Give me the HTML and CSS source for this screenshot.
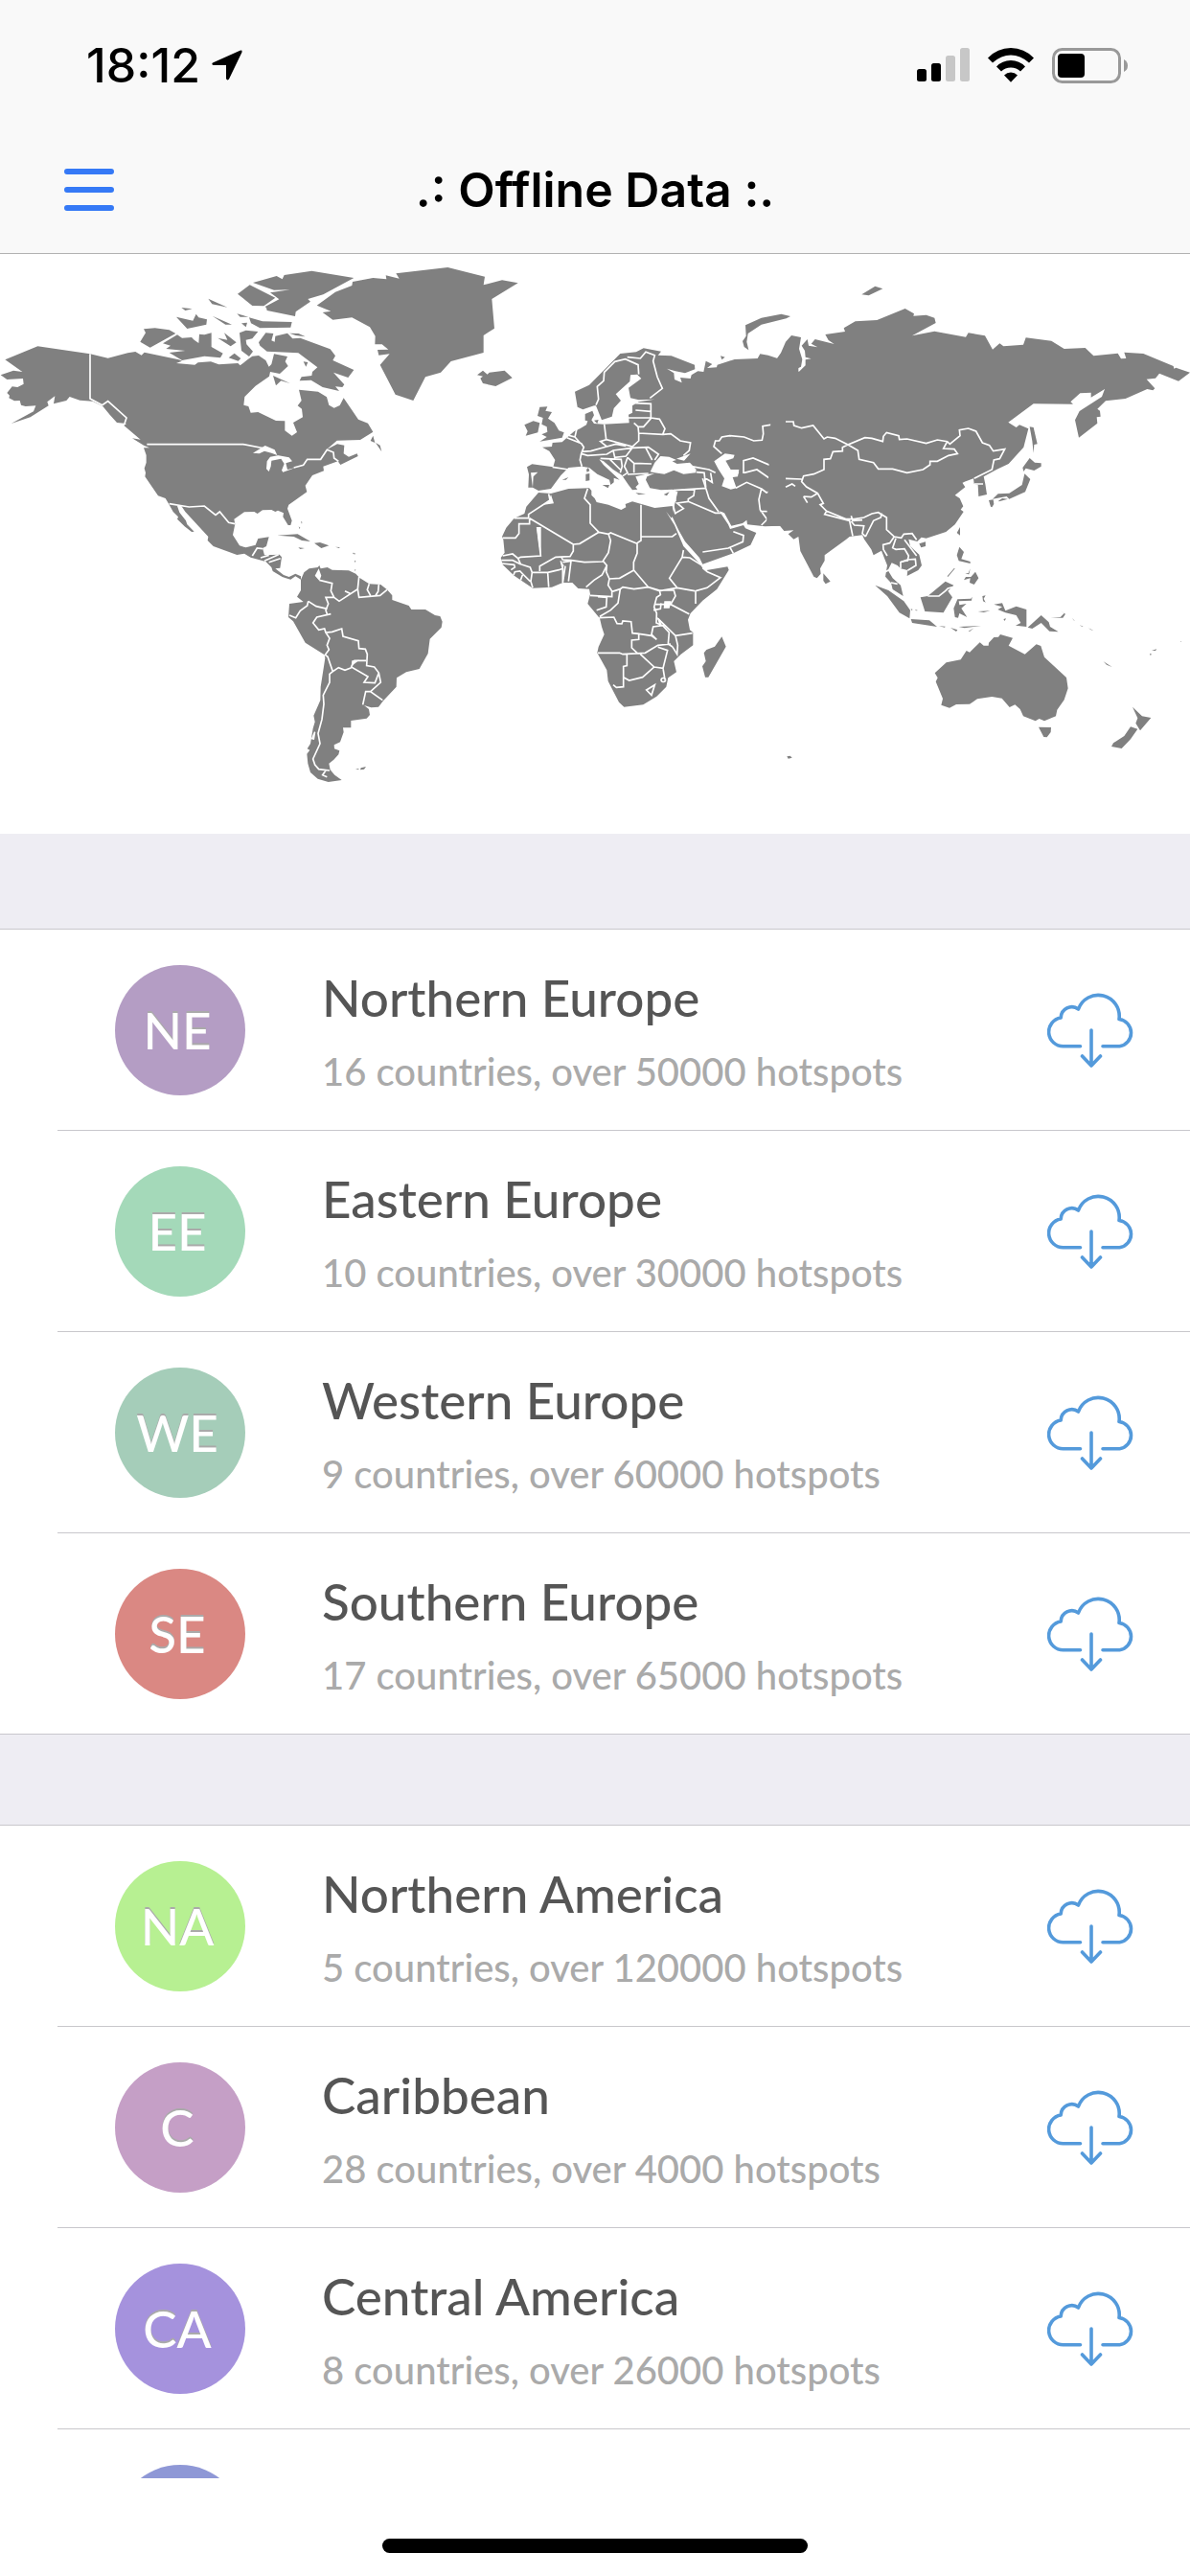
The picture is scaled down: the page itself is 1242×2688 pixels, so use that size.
FILE: index.html
```html
<!DOCTYPE html>
<html lang="en">
<head>
  <meta charset="UTF-8">
  <meta name="viewport" content="width=device-width, initial-scale=1.0">
  <title>Offline Data</title>
  <link rel="stylesheet" href="styles.css">
</head>
<body>

<!-- shared download icon -->
<svg class="defs" width="0" height="0" aria-hidden="true">
  <symbol id="cloud" viewBox="31 35 92 80">
    <path d="M65.500 91.800H48A15 15 0 0 1 45.200 62A11.500 11.500 0 0 1 63.500 53A22 22 0 0 1 106 63.500A14.300 14.300 0 0 1 106.500 91.800H89M77 75V112M67.500 102L77 112L86.500 102" fill="none" stroke="#549adb" stroke-width="3.600" stroke-linecap="round" stroke-linejoin="round"/>
  </symbol>
</svg>

<header>
  <div class="status">
    <span class="time">18:12</span>
    <svg class="location" viewBox="0 0 32 32" width="32" height="32" aria-hidden="true">
      <path d="M31.500 .8Q31 0 29.500 .8L1 13.500Q-.5 15 1.500 16H15V30Q16 32.500 18 30.500L31.500 2.500Z"/>
    </svg>
    <svg class="signal" viewBox="0 0 55 36" width="55" height="36" aria-hidden="true">
      <rect x="0" y="22" width="10" height="13" rx="2.500"/>
      <rect x="15" y="16" width="10" height="19" rx="2.500"/>
      <rect class="off" x="30" y="8" width="10" height="27" rx="2.500"/>
      <rect class="off" x="45" y="0" width="10" height="35" rx="2.500"/>
    </svg>
    <svg class="wifi" viewBox="0 0 50 36" width="50" height="36" aria-hidden="true">
      <path d="M1 10.500Q11 0 25 0T49 10.500L44 15.500Q35 7.500 25 7.500T6 15.500ZM10 19.500Q16 13 25 13T40 19.500L35 24.500Q31 20.500 25 20.500T15 24.500ZM18 28.500Q21 25.500 25 25.500T32 28.500L25 35.800Z"/>
    </svg>
    <svg class="battery" viewBox="0 0 80 37" width="80" height="37" aria-hidden="true">
      <rect x="1.500" y="1.500" width="69" height="34" rx="9" fill="none" stroke="#999" stroke-width="3"/>
      <rect x="6" y="6" width="28" height="25" rx="4"/>
      <path d="M75 12Q79 14 79 18.500T75 25Z" fill="#999"/>
    </svg>
  </div>
  <nav>
    <button class="menu" aria-label="Menu">
      <svg viewBox="0 0 52 46" width="52" height="46" aria-hidden="true">
        <path d="M3 4H49M3 23H49M3 42H49" stroke="#3579f6" stroke-width="6" stroke-linecap="round"/>
      </svg>
    </button>
    <h1>.: Offline Data :.</h1>
  </nav>
</header>

<main>
  <svg class="map" viewBox="0 15 3726 1815" role="img" aria-label="World map">
    <!-- north america, greenland -->
    <g>
      <path class="land" d="M16 346L118 304L282 328L338 341L400 325L424 321L443 332L452 323L560 346L570 350L552 357L610 362L620 355L660 352L685 361L745 357L752 364L775 346L790 335L810 333L832 348L842 368L850 360L858 328L900 336L893 352L902 366L876 390L846 384L843 398L800 428L766 462L763 488L778 492L785 512L808 510L864 537L892 538V568L914 584L930 573L918 543L948 526L945 500L932 490L944 474L936 440L996 446L1023 463L1030 488L1046 497L1064 489L1076 466L1122 533L1152 545L1168 572L1128 597L1055 599L1022 628L1056 610L1078 614L1076 640L1092 650L1118 640L1121 648L1066 675L1058 664L1012 680L1014 694L978 708L956 740L961 760L904 800L900 812L914 850L910 864H902L886 838L888 826L870 818L862 822L850 816L822 817L806 828L796 822L765 823L733 845L736 860L729 895L750 928L770 934L800 926L808 906L842 901L834 930L822 936L828 958L875 956L882 964L877 998L862 1000L888 1020L905 1026L925 1016L942 1024V1034L925 1024L910 1034L895 1030L884 1026L854 1008L850 996L832 978L785 965L765 953L742 957L668 930L650 912L652 900L580 822L568 804H555L562 824L582 850L586 862L608 884L600 885L578 868L555 845L558 838L542 822L530 800L518 780L495 772L454 712L456 700L452 686L458 668V645L450 622H468L450 614L414 592L440 596L388 552L396 546L366 543L345 520L322 492L290 476L250 473L218 462L208 474L168 484L172 460L148 478L152 490L95 526L35 546L105 508L112 490L80 492L66 488L62 474L45 475L28 466L30 458L22 450L38 430L55 432L74 422L72 405L22 408L2 394L42 380L70 384Z"/>
      <path class="land" d="M439 290L456 262L450 250L485 247L530 253L550 264L470 308ZM510 295L555 268L570 278L600 276L608 284L622 294L624 266L640 268L662 262V306L698 326L690 340L640 335L570 348L530 324L580 318L520 312L534 302ZM552 212L604 224L614 203L622 214L648 220L646 236L586 249ZM568 183L602 187L580 192ZM652 155L712 182L664 172ZM665 209L726 236H706ZM682 278L712 284L702 262L740 292L722 304ZM742 202L778 212H752ZM756 232L774 230L770 244ZM780 214L822 226L914 228L910 245L814 247L786 232ZM750 262L770 254L808 258L790 280L770 284L772 298L792 320L780 336L756 318ZM716 340L734 326L754 342L746 350ZM744 140L782 112L862 152L826 178L790 177ZM792 105L866 84L884 94L890 81L976 68L1108 90L1012 142L964 156L972 164L926 196L924 210L836 192L834 184L830 180L874 157L846 136L908 127L858 128ZM810 292L832 262L856 264L850 286L860 290L862 272L900 263L916 280L940 278L1034 313L1050 334L1042 348L1108 378L1090 402L1044 386L1078 424L1072 432L1050 430L1062 444L1010 432L974 410L938 412L944 400L976 396L978 384L994 370L934 325L836 320L814 302ZM906 263L935 264L956 274L926 270ZM950 352L964 354L958 368ZM855 396L908 420L880 412L864 427ZM1160 600L1168 584L1174 606ZM1176 606L1190 614L1195 634ZM868 896L932 892L972 915L945 912L920 900ZM984 920L1002 918L1030 928L1006 936ZM934 934L954 936L940 939ZM1050 932L1064 933L1062 936ZM1104 950L1110 952L1106 954ZM935 868L938 876L940 872ZM942 852L945 860L946 854Z"/>
      <path class="land" d="M992 176L1050 134L1102 114L1104 102L1168 90L1210 94L1208 82L1250 92L1240 76L1402 57L1518 86L1514 112L1572 97L1622 106L1540 156L1548 248L1514 270V324L1412 351L1380 386L1332 400L1294 474L1238 455L1190 362L1220 328L1186 332L1182 315L1216 314L1196 298H1174L1175 272L1158 244L1102 214L1042 221L1010 198L1036 194Z"/>
      <path class="water" d="M792 638L830 615L860 628L868 645L905 652L915 664L895 670L900 690L925 684L886 698L882 692L890 672L880 656L850 662L848 680L842 696L834 688L836 664L846 650L870 646L850 638L828 632L812 640Z"/>
      <path class="border" d="M282 328V468L320 488L338 476L396 528L390 546M460 611H762L830 624M920 684L950 676L962 658H1004L1024 628L1044 636L1046 654L1060 664M530 797L592 807L640 804L675 832L688 822L716 856L736 860M790 960L805 936L822 938M816 966L842 958M828 976L872 956M842 980L878 968"/>
    </g>

    <!-- south america -->
    <g transform="translate(600 840)">
      <path class="land" d="M342 195L352 172L368 160L395 156L400 150L404 160L425 156L440 164L492 166L514 176L525 188L556 208L592 210L612 226L628 244V258L680 276L688 288L732 288L762 306L778 309L785 326L782 344L746 380L740 426L713 474L672 484L642 502L641 530L600 574L585 593L562 595L540 588L555 600L558 618L548 629L499 636V658H474L476 672L465 703L446 712L447 724L463 730L460 742L445 758L430 770L434 790L448 806L470 822L428 828L395 818L372 798L364 770L361 740L370 728L362 724L372 708L380 660L386 640L382 620L403 572L404 530L418 440L416 430L356 392L318 325L303 312L306 270L350 264L330 248L342 228ZM513 788L521 786L525 789ZM528 790L530 784L546 780L540 788ZM508 110L510 118L512 112ZM510 134L512 142L514 136ZM510 164L512 168L514 162Z"/>
      <path class="water" d="M398 160L386 182L400 198L406 182ZM502 448L525 446L500 466ZM384 670L388 672L384 696L374 694Z"/>
      <path class="border" d="M400 196L440 206L436 230L446 250H420L428 270L420 290L424 302M446 250L462 262L520 224L524 186M520 224L524 250L590 244L612 226M556 208L550 226L560 244M586 210L584 232L576 244M480 230L496 238M365 262L390 278L425 286M365 262L362 276L340 292L326 314L306 306M436 302L392 312L380 330L398 352L416 348L420 360L440 358L470 348L474 372L522 386L524 410L544 412L550 428L548 464L572 468L586 486L592 516L560 545L598 572M560 545H545L536 586M586 486L574 518L540 516L552 498L500 468L510 448L546 448M420 360L432 378L424 400L430 414L418 430L426 436L442 482L460 470L480 478L500 470M442 482L432 490V516L412 556L414 584L408 632L396 676L402 708L380 756L386 774L398 788L432 792M420 792L410 806L424 812"/>
    </g>

    <!-- europe, western russia, arabia -->
    <g transform="translate(1200 0)">
      <path class="land" d="M600 446L645 425L685 385L742 327L792 322L815 310L870 320L860 332L902 334L975 362L976 376L945 388L915 382L888 374L910 388L912 408L935 418L930 402L962 405L965 394L985 382L1003 384L1010 350L1030 360L1014 372L1044 370L1046 362L1100 345L1172 342L1180 328L1205 332L1260 350L1300 370V866H1238L1195 868L1140 862L1138 848L1125 858L1090 866L1068 826L1052 820L1080 862L1086 876L1128 864L1134 874L1168 888L1150 926L1096 952L1000 986L990 966L945 915L925 880L905 838L912 800L922 760L905 752L870 754L835 748L822 722L826 712L850 702L820 705L790 712L800 735L790 745L796 752L780 754L768 738L752 715L748 708L720 690L690 664L676 658L690 676L740 722L722 716V730L712 738L708 722L670 704L645 684L622 680L580 684L556 708L525 750L486 756L468 746H454L456 705L450 682L466 673L532 682L538 660L520 632L498 620L528 618L530 606L560 604L575 590L598 570L616 562L636 550L640 538L632 536V516L655 506L660 520L652 535L660 546L690 548L730 546L770 544L768 518L780 512V490L800 478L850 470L800 472L774 466L768 434L808 405L795 392L774 394L772 414L728 454L744 474L722 498L716 524L684 535L666 490H660L625 502L608 494Z"/>
      <path class="land" d="M294 394L312 380L326 392L332 386L380 380L404 403L352 429L312 420L304 404L312 398ZM490 494L514 493L508 506L528 510L516 530L536 544L550 568L566 574L560 590L490 602L512 588L496 580L514 572L512 556L496 548L500 528L483 522ZM442 550L470 538L490 544L484 574L446 584L452 570ZM660 536L674 534L670 546ZM636 690L642 684L646 694L638 698ZM634 704L646 702V724L634 726ZM686 738L708 738L704 748ZM790 763L822 766L800 769ZM878 768L896 760L888 772ZM560 722L580 714L572 722ZM1134 238L1184 215L1246 203L1275 210L1262 217L1184 236L1142 264L1138 290L1144 316L1130 306L1125 288L1136 272ZM1056 334L1070 338L1060 346Z"/>
      <path class="water" d="M836 697L850 668L868 648L895 650L918 660L905 664L920 672L960 668L980 690L978 700L940 704L910 692L880 704L850 700ZM918 656L962 640L942 662ZM1036 664L1070 640L1100 644L1096 655L1072 662L1088 690L1114 690L1110 712L1094 714L1106 748L1088 752L1060 742L1068 718L1050 690ZM462 700L484 698L470 712L468 746Z"/>
      <path class="border" d="M666 488L674 470L670 430L690 412L692 385L725 352L758 344L798 362L800 392M764 338L805 342L822 322L850 332L845 350L858 400L874 436L835 466M790 482L838 484V528H768M790 504L838 508M838 528L865 532L882 562L875 580L800 576L798 556L785 544M838 530L815 556H798M692 548L698 596L780 618L800 600V576M698 596L680 602L700 618L650 632L620 634M575 590L620 608L628 620L620 640L616 660L622 680M530 682L580 690M620 640L640 646L700 642L720 630L780 622M700 618L728 610L760 616M875 580L900 578L930 600L962 606L958 630L940 646M780 622L830 620L862 642L850 660M822 622L842 660M765 652L785 670L840 672M720 630L725 652L760 648L780 622M680 655L745 658L748 680L742 700M710 658L742 690M765 652L755 680L765 700L750 710M765 705L830 702M785 672V700M570 580L600 588L616 606M600 588L606 562M965 680L1020 690L1040 700M980 698L1005 700L1010 745M1005 715L1030 730L1025 700M1260 542L1188 554L1190 578L1186 598L1160 600L1130 588L1085 584L1060 588L1052 600H1040L1035 618L1060 640"/>
    </g>

    <!-- africa, middle east -->
    <g transform="translate(1500 600)">
      <path class="land" d="M186 162L225 165L280 150L345 148L352 156V170L362 180L368 192L405 200L445 216L460 208L458 198L480 190L550 210L605 204L610 230L602 242L586 222L612 264L640 330L690 384L700 398L708 406L778 394L782 404L745 464L700 500L662 540L654 560L660 592L670 600V640L632 668L610 690L618 724L592 742L586 770L556 800L514 826L454 833L438 818L404 752L400 718L370 664L374 645L392 606L384 582L378 556L340 510L348 480L345 464L310 462L292 444H262L228 458L168 461L110 422L74 388L68 366L80 350L76 310L72 300L85 272L110 242L142 228L148 206ZM760 613L773 644L718 740H708L699 706L710 690L704 664L712 654L738 644ZM1078 415L1100 440L1085 448L1078 438Z"/>
      <path class="water" d="M225 168L234 196L203 200L218 186ZM180 270H194V360L188 330ZM580 502H602L596 524H578ZM800 92L814 98L808 108L798 104ZM254 376L266 390L262 400ZM556 548L572 572L564 574Z"/>
      <path class="border" d="M218 166L222 186L155 230V242H110M158 242V260H125V290L114 304H74M158 242L295 324M182 270L193 360L130 364L122 368M295 324V345L285 362L240 364L190 392V408M295 324L315 322L375 286L348 258V200L330 180L340 150M375 286L405 292L412 288L495 322V352L484 380V404L530 458M507 200V312L495 320M507 300H605L618 290M405 292L412 312L405 350L388 376L400 390L398 410L408 432L440 430L486 404M258 364L262 372L288 374L330 380L388 378M262 380L288 376L280 440M270 392L262 444M256 376L262 400V444M215 412L250 404L262 400M215 412L218 458M166 412H215M166 412L162 440L168 460M122 368L130 386L160 396L166 412M74 360L105 354L122 368M70 374L105 374L130 386M72 384L110 388L112 396L100 404M108 420L112 410L128 408L140 420L160 440M136 420L130 436M400 390L385 420L360 436L335 458M408 432L404 452L416 470V488L348 484M416 472L442 464L450 458L485 464L530 458L565 468M442 464L435 508L412 530L378 550M372 488L400 490L398 520L368 530M376 554L422 552L432 572L447 573L450 564L476 566L480 602L500 604V622L478 624V648L495 664M372 664H440L450 668L520 664L560 640L600 636M463 668V704L452 706V770L430 772L420 764M452 740L470 750L512 740L548 708L505 668M548 708L576 712L590 656L560 646M576 712L582 748M584 748A7 6 0 1 0 584 749M524 780L550 764L540 796ZM480 602L500 604L540 610L556 622L540 606L545 582L575 578L595 600L592 636L605 644M565 468L568 482L556 490L548 520L556 540L555 570L575 578M548 512L600 512L658 542M546 530L568 526L570 508M560 556L615 610L668 602M615 610L622 640L620 668L605 644M565 468H610L615 486L600 512M678 510V470L714 460L756 428L715 410L700 398M530 458L565 470L620 460L675 470M620 460L596 430L636 364L640 342M636 364L660 366L695 388"/>
      <path class="border" d="M612 228L640 212L620 195L655 190L740 226H762M655 190V182L672 172L675 150M615 190L612 160M606 195L615 230M700 348L780 336L826 316L828 296L796 284M786 334L796 352M608 155L710 148L720 180L750 222M710 148L700 118M804 148L838 130L884 150L876 184L880 216L902 246L884 264M880 220L925 222L970 190L985 150L1024 142M884 150L900 162L948 144L870 90L830 100M828 102V62L858 54L910 76L930 74L960 104L1020 88H1080M1024 142L1040 170L1030 196L978 246L990 286L970 284M960 104L956 122L1020 118L1024 142M985 96L1010 106L990 118M948 144L960 122"/>
    </g>

    <!-- asia -->
    <g transform="translate(2460 0)">
      <path class="land" d="M-40 360L-15 325L0 290L18 270L48 276L42 312L52 345L48 368L20 382L42 383L62 364V346L80 343L62 338L60 318L50 302L68 282L72 302L100 307L80 296L92 282L152 297L134 285L124 267L186 258L182 247L218 226L286 222L374 186L402 202L400 209L440 206L466 215L470 231L396 271L466 257L564 275L572 262L624 271L648 314L670 295L682 304L744 299L752 277L832 287L872 312L938 309L964 334L1040 326L1050 343L1066 342L1060 323L1120 327L1214 366L1216 374L1222 371L1266 386L1230 413L1170 389L1158 404L1130 407L1156 436L1150 442L1132 438L1064 468L1002 475L976 500L984 506L986 524L974 526L976 545L918 590L906 535L920 507L990 462L999 438L956 464V449L922 451L892 478L900 485L776 484L697 542L722 558L732 550L760 562L745 620L698 672L660 690L620 712L625 735L630 768L604 774L602 738L590 735L588 718L560 728L530 744L514 728L548 708L558 712L550 726L562 745L530 770L545 780L556 805L548 815L557 822L530 862L502 885L440 905L425 902L412 915L385 908L390 930L418 956L426 990L415 1005L380 1023L382 1005L360 1000L350 990L332 982L320 1005L335 1030L360 1052L368 1086L335 1065L330 1045L312 1025L318 990L300 944L275 958L268 940L246 908L240 895L200 900L190 908L122 958V975L108 1000L110 1016L98 1030L88 1025L46 945L40 900L25 908L8 892L25 880L-5 882L-18 866H-60Z"/>
      <path class="land" d="M238 142L280 116L304 124L260 145ZM764 556L776 558L788 610L778 612L776 638L772 600ZM742 684L764 654L780 668L800 670V680L778 693L752 686L745 696ZM748 703L766 720L750 760L700 782L692 774L648 782L665 766L700 764L740 738ZM636 786L650 784L652 798L646 808L642 806ZM666 788L678 780L696 782L668 790ZM546 870V896L536 888ZM418 922L438 916V930L424 934Z"/>
      <path class="border" d="M0 540H24L26 552L50 560L86 552L120 594L130 588L155 592L195 612L248 590L270 592L304 602L306 586L316 574L354 584L356 596L380 594L440 608L475 597L506 602L514 610L546 584L544 566L572 561L596 570L616 606L638 614L650 632L686 626L670 656L652 660L646 690L590 718M195 612L226 630L230 658L275 668L290 688H335L380 700L430 690L452 675V664H475L510 646L538 640L528 626L494 624L506 602M195 612L178 620V632L148 634L140 656L120 658V690L88 704L56 710L50 728L65 744L100 764L118 796L108 800L128 820L190 845H215L245 840L270 828L290 824L316 840V878L340 900L362 904L370 892L396 890L410 910M128 820L122 830L200 850L210 898M205 835L210 850L240 848M205 852L215 864L245 866L240 890L250 900M250 900L262 876L275 850L298 840L300 826M56 774L68 794M56 774L80 776L100 764M340 900L326 920L305 925L306 940L318 960M345 905L335 935L345 940L372 938L385 960L382 975L362 978M372 910L410 960M0 718L50 720M0 745L20 735L30 742M590 735H618"/>
    </g>

    <!-- south east asia, oceania -->
    <g transform="translate(2520 840)">
      <path class="land" d="M407 487L443 454L488 445L506 417L516 422L548 391L560 401H575L576 392L592 375L606 374L612 366L651 377L638 401L689 428L725 397L739 402L750 437L819 501L824 535L812 571L790 602L786 622L750 637L734 630L722 637L684 622L674 600L658 586L641 594L617 566L586 561L540 568L516 584L474 585L453 596L427 587L432 567L410 514L416 502ZM732 656L771 657L770 672L758 688L748 687ZM1026 593L1056 622L1084 627L1050 667L1036 644L1042 628ZM1020 655L1042 662L1020 694L992 723L960 717L966 706L1000 684Z"/>
      <path class="land" d="M484 92L498 108L490 130L518 138V144L482 136L476 118ZM534 170L544 190L530 210L516 204L518 190L498 196L504 186L520 186ZM468 158L470 160L448 186L446 184ZM502 176L512 174L518 160L514 178ZM220 212L262 228L310 262L330 290L328 316L296 298L258 246ZM332 318L390 322L414 342L336 330ZM420 340L440 341L438 344ZM456 345L478 352L474 357ZM482 342L552 339L500 346ZM512 356L530 346L516 357ZM362 250L385 246L440 200L466 212L448 230L462 250L434 298L376 294ZM470 312L466 284L478 256L520 254L524 248L522 260L482 262L484 274L506 270L490 284L508 312L484 300L480 314ZM556 246L566 244L560 254L566 266L558 262ZM542 294L580 292L560 297ZM592 272L618 268L628 292L662 278L694 288V342L660 338L676 330L662 306L628 298L604 288L618 280ZM698 344L740 306L764 328L768 342L794 358L766 356L740 330L712 348ZM770 314L800 312L812 300L798 290L816 302L808 314ZM622 318L630 316L626 324ZM836 314L846 324L842 322ZM860 336L872 342L868 342ZM888 346L904 354L896 352ZM332 286L338 288L334 291ZM345 288L354 291L348 292ZM1086 416L1102 412L1098 417ZM1080 425L1086 428L1082 432ZM935 451L962 468L945 461ZM1176 387L1180 388L1177 389Z"/>
      <path class="border" d="M385 246L420 246L440 230L448 222L464 218M252 170L262 165M270 204L290 208M300 160V140L322 132L346 130L348 150L322 166"/>
    </g>
    <!-- kerguelen -->
    <path class="land" d="M2464 1588L2474 1586L2480 1592L2468 1595Z"/>
  </svg>

  <section class="regions">
    <ul>
      <li>
        <span class="avatar ne">NE</span>
        <div class="info">
          <h2>Northern Europe</h2>
          <p>16 countries, over 50000 hotspots</p>
        </div>
        <button class="download" aria-label="Download Northern Europe"><svg><use href="#cloud"/></svg></button>
      </li>
      <li>
        <span class="avatar ee">EE</span>
        <div class="info">
          <h2>Eastern Europe</h2>
          <p>10 countries, over 30000 hotspots</p>
        </div>
        <button class="download" aria-label="Download Eastern Europe"><svg><use href="#cloud"/></svg></button>
      </li>
      <li>
        <span class="avatar we">WE</span>
        <div class="info">
          <h2>Western Europe</h2>
          <p>9 countries, over 60000 hotspots</p>
        </div>
        <button class="download" aria-label="Download Western Europe"><svg><use href="#cloud"/></svg></button>
      </li>
      <li>
        <span class="avatar se">SE</span>
        <div class="info">
          <h2>Southern Europe</h2>
          <p>17 countries, over 65000 hotspots</p>
        </div>
        <button class="download" aria-label="Download Southern Europe"><svg><use href="#cloud"/></svg></button>
      </li>
    </ul>
  </section>

  <section class="regions">
    <ul>
      <li>
        <span class="avatar na">NA</span>
        <div class="info">
          <h2>Northern America</h2>
          <p>5 countries, over 120000 hotspots</p>
        </div>
        <button class="download" aria-label="Download Northern America"><svg><use href="#cloud"/></svg></button>
      </li>
      <li>
        <span class="avatar c">C</span>
        <div class="info">
          <h2>Caribbean</h2>
          <p>28 countries, over 4000 hotspots</p>
        </div>
        <button class="download" aria-label="Download Caribbean"><svg><use href="#cloud"/></svg></button>
      </li>
      <li>
        <span class="avatar ca">CA</span>
        <div class="info">
          <h2>Central America</h2>
          <p>8 countries, over 26000 hotspots</p>
        </div>
        <button class="download" aria-label="Download Central America"><svg><use href="#cloud"/></svg></button>
      </li>
      <li>
        <span class="avatar sa">SA</span>
        <div class="info">
          <h2>South America</h2>
        </div>
        <button class="download" aria-label="Download South America"><svg><use href="#cloud"/></svg></button>
      </li>
    </ul>
  </section>
</main>

<footer>
  <div class="home"></div>
</footer>

</body>
</html>
```

FILE: styles.css
```css
* {
  box-sizing: border-box;
}
body {
  margin: 0;
  height: 100vh;
  display: flex;
  flex-direction: column;
  background-color: #ffffff;
  font-family: Lato, sans-serif;
}
h1, h2, p, ul {
  margin: 0;
  padding: 0;
}
button {
  padding: 0;
  border: none;
  background: none;
  cursor: pointer;
}
svg {
  display: block;
}
.defs {
  position: absolute;
}

/* header */
header {
  flex: none;
  background-color: #f9f9f9;
  border-bottom: 1px solid #b2b2b2;
  font-family: Inter, sans-serif;
}
.status {
  display: flex;
  align-items: center;
  height: 132px;
  padding: 4px 64px 0 90px;
}
.time {
  font-size: 50px;
  font-weight: 500;
}
.location {
  margin-left: 12px;
}
.signal {
  margin-left: auto;
}
.signal .off {
  fill: #c7c7c7;
}
.wifi {
  margin: 0 18px;
}
nav {
  display: grid;
  grid-template-columns: 1fr auto 1fr;
  align-items: center;
  height: 132px;
  padding: 0 67px;
}
.menu {
  justify-self: start;
}
h1 {
  font-size: 50px;
  font-weight: 600;
}

/* list */
main {
  flex: 1;
  min-height: 0;
  overflow: auto;
  scrollbar-width: none;
  background-color: #eeedf3;
}
.map {
  width: 100%;
  background-color: #ffffff;
}
.land {
  fill: #808080;
}
.water {
  fill: #ffffff;
}
.border {
  fill: none;
  stroke: #ffffff;
  stroke-width: 5;
}
.regions {
  padding-top: 99px;
}
.regions + .regions {
  padding-top: 94px;
}
.regions ul {
  list-style: none;
  background-color: #ffffff;
  border-top: 1px solid #c8c7cc;
}
.regions li {
  display: flex;
  align-items: center;
  height: 210px;
  margin-left: 60px;
  padding: 0 57px 0 60px;
  border-bottom: 1px solid #c8c7cc;
}
.regions li:last-child {
  margin-left: 0;
  padding-left: 120px;
}
.avatar {
  flex: none;
  width: 136px;
  height: 136px;
  padding-right: 6px;
  border-radius: 50%;
  color: #ffffff;
  font-size: 53px;
  font-weight: 500;
  line-height: 136px;
  text-align: center;
  text-shadow: 0 -2px #aaaaaa;
}
.ne { background-color: #b49dc4; }
.ee { background-color: #a4d9b9; }
.we { background-color: #a5cdb9; }
.se { background-color: #da8883; }
.na { background-color: #b7f092; }
.c { background-color: #c59fc6; }
.ca { background-color: #a592dd; }
.sa { background-color: #8f98d6; }
.info {
  flex: 1;
  align-self: flex-start;
  padding: 34px 0 0 80px;
}
h2 {
  color: #555555;
  font-size: 53px;
  font-weight: 500;
  line-height: 74px;
}
p {
  color: #aaaaaa;
  font-size: 40px;
  font-weight: 500;
  line-height: 80px;
}
.download svg {
  width: 92px;
  height: 80px;
}

/* home indicator */
footer {
  flex: none;
  height: 102px;
  display: flex;
  justify-content: center;
  align-items: flex-end;
  padding-bottom: 24px;
}
.home {
  width: 444px;
  height: 15px;
  border-radius: 8px;
  background-color: #000000;
}
```
